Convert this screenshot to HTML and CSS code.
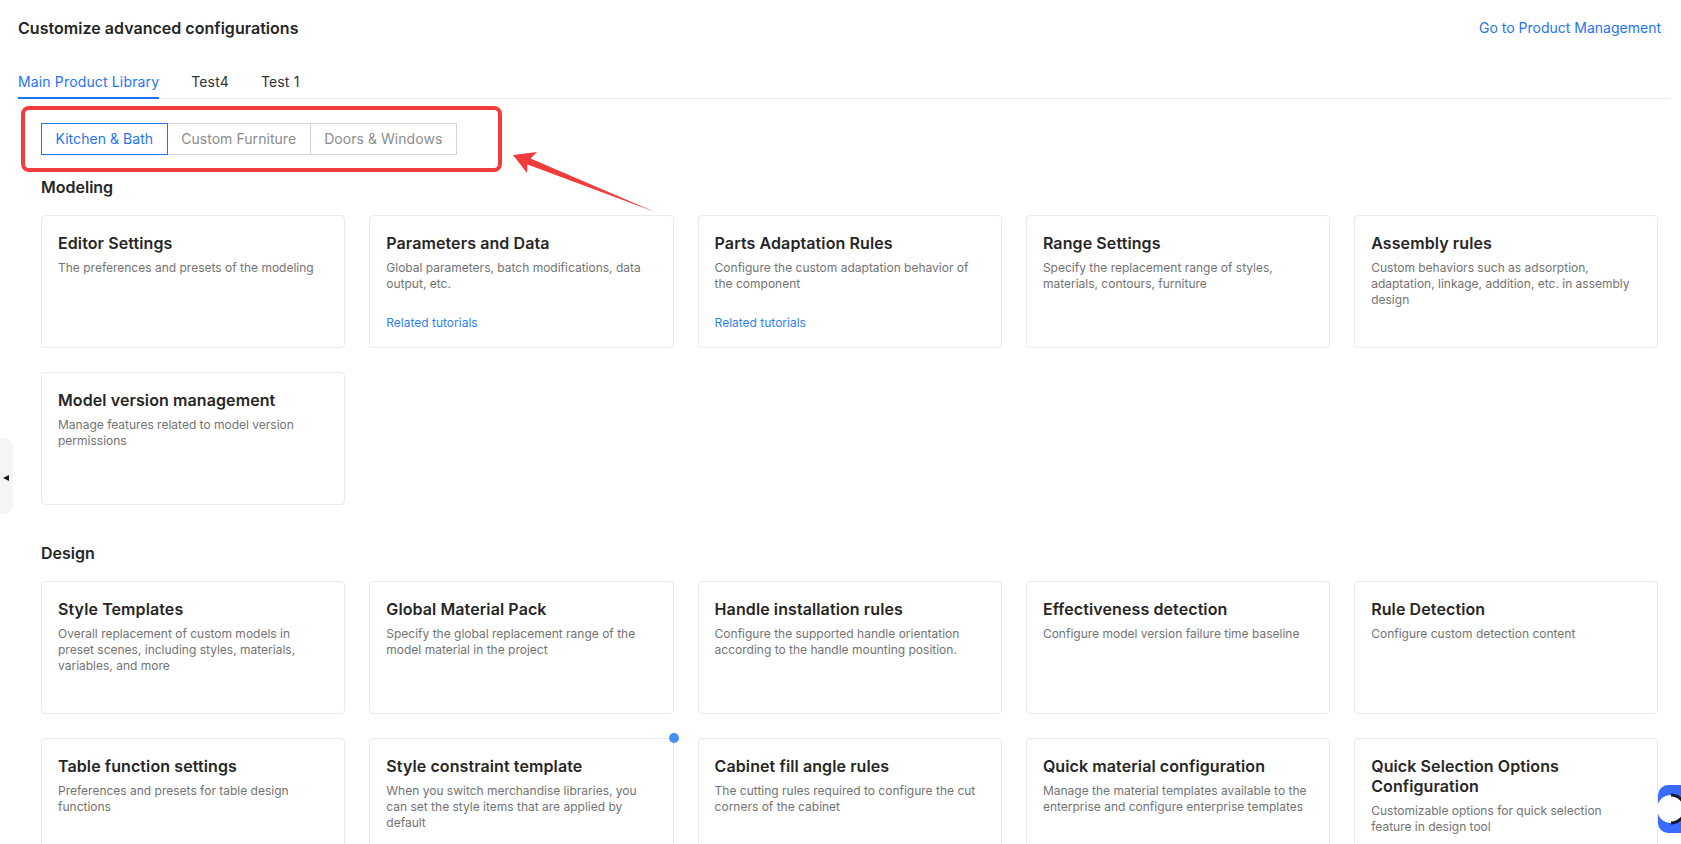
FILE: index.html
```html
<!DOCTYPE html>
<html lang="en">
<head>
<meta charset="utf-8">
<title>Customize advanced configurations</title>
<link rel="stylesheet" href="styles.css">
</head>
<body>
<div class="page">
  <header class="page-header">
    <h1 class="page-title">Customize advanced configurations</h1>
    <a class="header-link" href="#">Go to Product Management</a>
  </header>
  <nav class="tabs">
    <span class="tab tab-active">Main Product Library</span>
    <span class="tab">Test4</span>
    <span class="tab">Test 1</span>
  </nav>
  <div class="content">
    <div class="segmented">
      <span class="seg seg-active">Kitchen &amp; Bath</span>
      <span class="seg">Custom Furniture</span>
      <span class="seg">Doors &amp; Windows</span>
    </div>

    <section class="section section-first">
      <h2 class="section-title">Modeling</h2>
      <div class="card-grid">
        <div class="card"><div class="card-title">Editor Settings</div><div class="card-desc">The preferences and presets of the modeling</div></div>
        <div class="card"><div class="card-title">Parameters and Data</div><div class="card-desc">Global parameters, batch modifications, data output, etc.</div><a class="card-link" href="#">Related tutorials</a></div>
        <div class="card"><div class="card-title">Parts Adaptation Rules</div><div class="card-desc">Configure the custom adaptation behavior of the component</div><a class="card-link" href="#">Related tutorials</a></div>
        <div class="card"><div class="card-title">Range Settings</div><div class="card-desc">Specify the replacement range of styles, materials, contours, furniture</div></div>
        <div class="card"><div class="card-title">Assembly rules</div><div class="card-desc">Custom behaviors such as adsorption, adaptation, linkage, addition, etc. in assembly design</div></div>
        <div class="card"><div class="card-title">Model version management</div><div class="card-desc">Manage features related to model version permissions</div></div>
      </div>
    </section>

    <section class="section">
      <h2 class="section-title">Design</h2>
      <div class="card-grid">
        <div class="card"><div class="card-title">Style Templates</div><div class="card-desc">Overall replacement of custom models in preset scenes, including styles, materials, variables, and more</div></div>
        <div class="card"><div class="card-title">Global Material Pack</div><div class="card-desc">Specify the global replacement range of the model material in the project</div></div>
        <div class="card"><div class="card-title">Handle installation rules</div><div class="card-desc">Configure the supported handle orientation according to the handle mounting position.</div></div>
        <div class="card"><div class="card-title">Effectiveness detection</div><div class="card-desc">Configure model version failure time baseline</div></div>
        <div class="card"><div class="card-title">Rule Detection</div><div class="card-desc">Configure custom detection content</div></div>
        <div class="card"><div class="card-title">Table function settings</div><div class="card-desc">Preferences and presets for table design functions</div></div>
        <div class="card"><span class="card-dot"></span><div class="card-title">Style constraint template</div><div class="card-desc">When you switch merchandise libraries, you can set the style items that are applied by default</div></div>
        <div class="card"><div class="card-title">Cabinet fill angle rules</div><div class="card-desc">The cutting rules required to configure the cut corners of the cabinet</div></div>
        <div class="card"><div class="card-title">Quick material configuration</div><div class="card-desc">Manage the material templates available to the enterprise and configure enterprise templates</div></div>
        <div class="card"><div class="card-title">Quick Selection Options Configuration</div><div class="card-desc">Customizable options for quick selection feature in design tool</div></div>
      </div>
    </section>
  </div>
</div>

<div class="annotation-box"></div>
<svg class="annotation-arrow" width="700" height="230" viewBox="0 0 700 230">
  <polygon points="513,155 537,152 530.5,158.5 655,212 527.5,164.5 527,173" fill="#f23b3b"/>
</svg>

<div class="side-handle"><span class="side-arrow"></span></div>

<div class="float-btn">
  <svg class="float-icon" width="34" height="34" viewBox="0 0 34 34">
    <circle cx="15" cy="17" r="14" fill="#ffffff"/>
    <path d="M15 3 A14 14 0 0 1 15 31" fill="none" stroke="#15172b" stroke-width="3"/>
  </svg>
</div>
</body>
</html>
```

FILE: styles.css
```css
html, body {
  margin: 0;
  padding: 0;
  height: 100%;
  overflow: hidden;
  background: #ffffff;
}

body {
  font-family: Inter, "Noto Sans", "Liberation Sans", sans-serif;
  color: #262626;
  position: relative;
}

.page {
  padding: 16px 11px 0 18px;
}

.page-header {
  display: flex;
  justify-content: space-between;
  align-items: center;
  height: 24px;
}

.page-title {
  margin: 0;
  font-size: 16px;
  font-weight: 600;
  line-height: 24px;
  color: #262626;
  letter-spacing: 0.03px;
}

.header-link {
  font-size: 14px;
  line-height: 24px;
  color: #1f74f5;
  text-decoration: none;
  margin-right: 9px;
}

.tabs {
  margin-top: 31px;
  display: flex;
  gap: 32px;
  border-bottom: 1px solid #e9e9e9;
}

.tab {
  position: relative;
  font-size: 14px;
  line-height: 22px;
  padding-bottom: 5px;
  color: #333333;
  letter-spacing: 0.15px;
}

.tab-active {
  color: #1f74f5;
}

.tab-active::after {
  content: "";
  position: absolute;
  left: 0;
  right: 0;
  bottom: -1px;
  height: 2px;
  background: #1f74f5;
}

.content {
  padding: 0 11.5px 0 23px;
}

.segmented {
  margin-top: 24px;
  display: flex;
}

.seg {
  position: relative;
  box-sizing: border-box;
  height: 32px;
  line-height: 30px;
  padding: 0 13.5px;
  font-size: 14px;
  color: #8c8c8c;
  border: 1px solid #d4d4d4;
  background: #fff;
  letter-spacing: 0.05px;
}

.seg + .seg {
  margin-left: -1px;
}

.seg-active {
  z-index: 1;
  color: #1f74f5;
  border-color: #1f74f5;
}

.section {
  margin-top: 36px;
}

.section-first {
  margin-top: 20px;
}

.section-title {
  margin: 0 0 16px;
  font-size: 16px;
  font-weight: 600;
  line-height: 24px;
  color: #262626;
}

.card-grid {
  display: grid;
  grid-template-columns: repeat(5, 1fr);
  gap: 24px;
}

.card {
  position: relative;
  box-sizing: border-box;
  height: 133px;
  border: 1px solid #e9e9e9;
  border-radius: 4px;
  padding: 17px 16px 16px;
  display: flex;
  flex-direction: column;
}

.card-title {
  font-size: 16px;
  font-weight: 600;
  line-height: 20px;
  margin-bottom: 7px;
  color: #262626;
  letter-spacing: 0.1px;
}

.card-desc {
  font-size: 12px;
  line-height: 16.2px;
  color: #737373;
}

.card-link {
  margin-top: auto;
  font-size: 12px;
  line-height: 16px;
  color: #2f7ff7;
  text-decoration: none;
}

.card-dot {
  position: absolute;
  top: -6px;
  right: -6px;
  width: 10px;
  height: 10px;
  border-radius: 50%;
  background: #4a8ff5;
}

.annotation-box {
  position: absolute;
  left: 20.5px;
  top: 106px;
  width: 481px;
  height: 66px;
  box-sizing: border-box;
  border: 4px solid #f23b3b;
  border-radius: 8px;
}

.annotation-arrow {
  position: absolute;
  left: 0;
  top: 0;
  pointer-events: none;
}

.side-handle {
  position: absolute;
  left: 0;
  top: 438px;
  width: 13px;
  height: 76px;
  background: #f4f5f7;
  border-radius: 0 10px 10px 0;
}

.side-arrow {
  position: absolute;
  left: 3px;
  top: 37px;
  width: 0;
  height: 0;
  border-right: 6px solid #1a1a1a;
  border-top: 3.5px solid transparent;
  border-bottom: 3.5px solid transparent;
}

.float-btn {
  position: absolute;
  left: 1658px;
  top: 785px;
  width: 30px;
  height: 48px;
  background: #3a6bff;
  border-radius: 10px 0 0 10px;
}

.float-icon {
  position: absolute;
  left: -2px;
  top: 7px;
}
```
